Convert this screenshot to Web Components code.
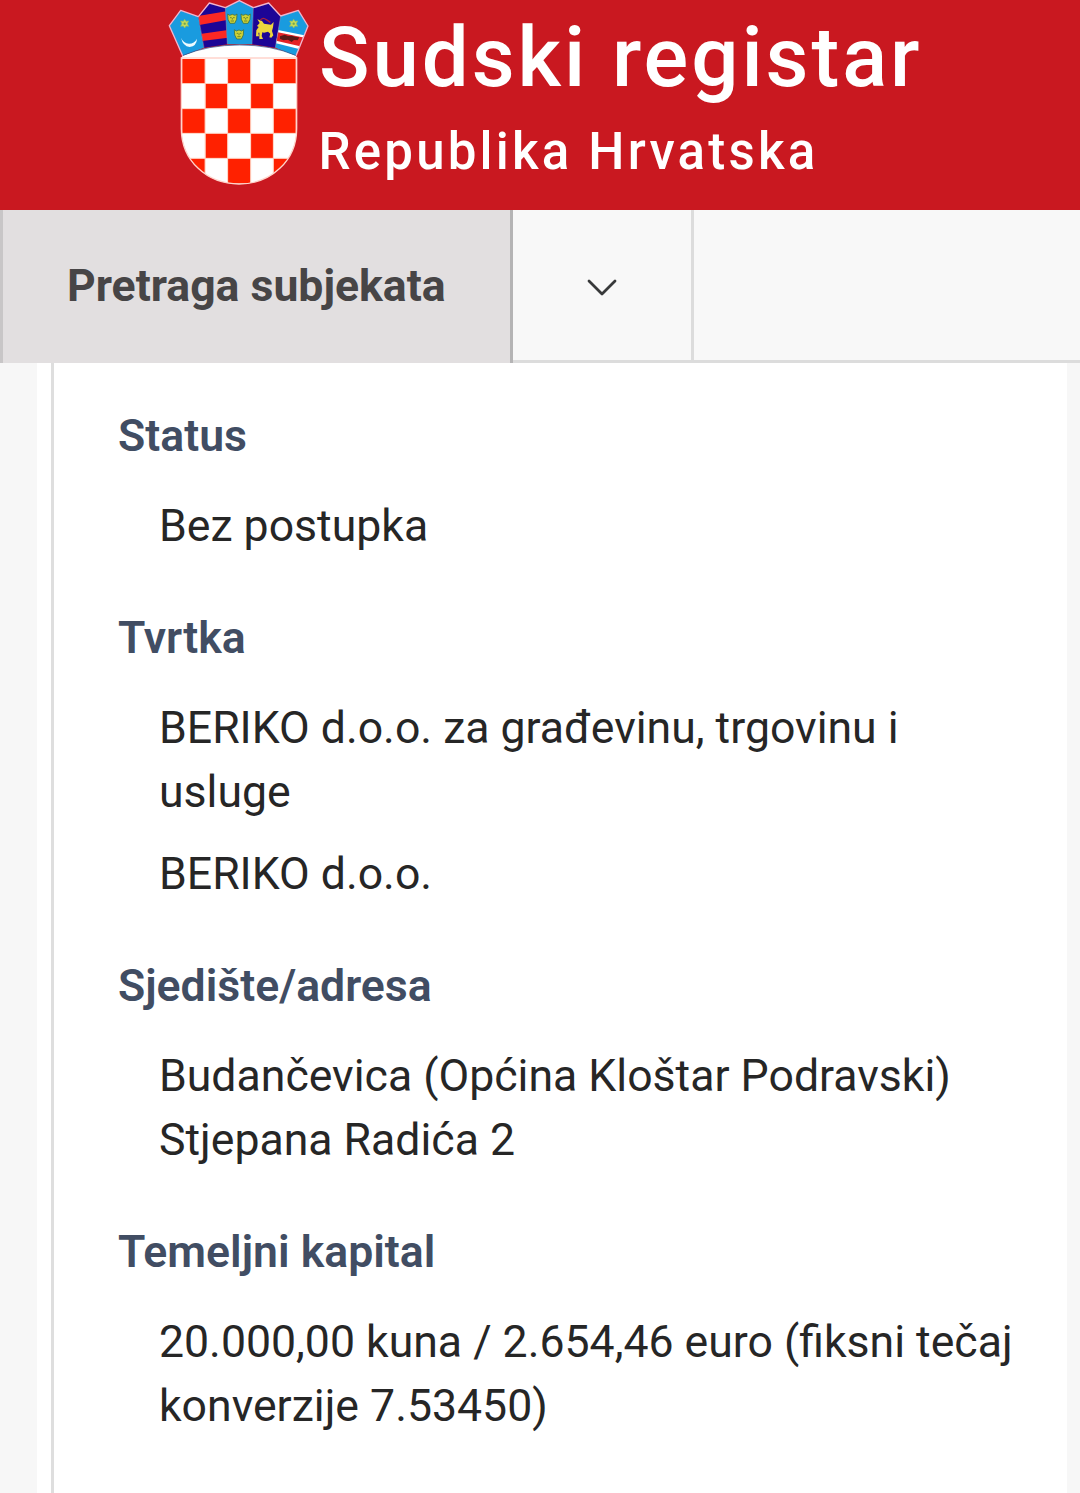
<!DOCTYPE html>
<html lang="hr">
<head>
<meta charset="utf-8">
<title>Sudski registar</title>
<style>
html,body{margin:0;padding:0}
body{font-family:Roboto,"Liberation Sans",sans-serif;background:#f7f7f7;overflow:hidden}
</style>
</head>
<body>
<registry-page></registry-page>
<script>
const define = (name, html) => {
  const t = document.createElement('template');
  t.innerHTML = html;
  customElements.define(name, class extends HTMLElement {
    constructor() {
      super();
      this.attachShadow({mode: 'open'}).append(t.content.cloneNode(true));
    }
  });
};

const xs = [66,135.5,203,272,340,408], ys = [176,250.5,326,400,475,552];
let checks = '';
for (let r = 0; r < 5; r++) for (let c = 0; c < 5; c++)
  if ((r + c) % 2 === 0)
    checks += `<rect x="${xs[c]+1}" y="${ys[r]+1}" width="${xs[c+1]-xs[c]-2}" height="${ys[r+1]-ys[r]-2}"/>`;
let grid = '';
for (let i = 1; i < 5; i++) grid += `M${xs[i]} 174V555M64 ${ys[i]}H410`;
const leopard = (x, y) => `<g transform="translate(${x} ${y})"><path d="M-14-14l6 4 8-3 8 3 6-4-1 16-6 12h-14l-6-12z" fill="#cfd235" stroke="#3f7248" stroke-width="2.5"/><path d="M-7-3h5m4 0h5M-5 7H5M0-2v5" stroke="#4c6c2c" stroke-width="2.2" fill="none"/></g>`;
const star = (x, y) => `<g transform="translate(${x} ${y})"><path d="M0-13l4 6 8-1-4 8 4 8-8-1-4 6-4-6-8 1 4-8-4-8 8 1z" fill="#c9dc56" stroke="#8cbc66" stroke-width="2" stroke-linejoin="round"/><circle r="3.5" fill="#6fa555"/></g>`;

define('croatia-arms', `
<style>:host{display:block;width:160px;height:190px}svg{display:block}</style>
<svg width="160" height="190" viewBox="0 0 480 570">
  <defs><clipPath id="shield"><path d="M64 174H410V386C410 482 333 552 237 552S64 482 64 386Z"/></clipPath>
  <clipPath id="dub"><path d="M115 50L148 9 196 23 202 133 132 143Z"/></clipPath>
  <clipPath id="slav"><path d="M362 48L415 31 444 78 408 167 346 143Z"/></clipPath></defs>
  <path d="M68 167Q145 134 239 134T408 167L411 174H63Z" fill="#fff"/>
  <path d="M28 77L62 31 115 50 132 143 68 167Z" fill="#199bdf"/>
  <path d="M115 50L148 9 196 23 202 133 132 143Z" fill="#1c0596"/>
  <g clip-path="url(#dub)" fill="#fb2823"><path d="M108 49L200 34 201 60 114 76ZM120 102L205 90 205 113 126 123Z"/></g>
  <path d="M196 23L238 2 280 23 276 133H202Z" fill="#199bdf"/>
  <path d="M280 23L326 9 362 48 346 143 276 133Z" fill="#1c0596"/>
  <path d="M362 48L415 31 444 78 408 167 346 143Z" fill="#199bdf"/>
  <g clip-path="url(#slav)"><path d="M350 89L440 107 432 151 340 128Z" fill="#fff"/><path d="M350 96L438 114 430 141 344 121Z" fill="#e52226"/><path d="M360 109l14-5 10 4 12-1 12 4 10 1-5 9-11-1-7 6-11-7-14 2-10-5z" fill="#5a1917"/></g>
  <g fill="none" stroke="#f1b5ce" stroke-width="4" stroke-linejoin="round"><path d="M68 167L28 77 62 31 115 50 148 9 196 23 238 2 280 23 326 9 362 48 415 31 444 78 408 167"/></g>
  <path d="M115 50L132 143M196 23L202 133M280 23L276 133M362 48L346 143" fill="none" stroke="#8090c0" stroke-width="1.5"/>
  <path d="M69 166Q145 135 239 135T407 166" fill="none" stroke="#245593" stroke-width="2"/>
  <path d="M63 113Q70 130 87 131 103 131 111 116 110 138 89 141 69 139 63 113Z" fill="#eefcff"/>
  ${star(74,71)}${star(401,71)}
  ${leopard(217,56)}${leopard(257,56)}${leopard(237,103)}
  <path d="M291 78L299 69 292 58 306 63 312 71 333 74 341 66 339 82 336 93 340 106 334 113 328 112 331 101 324 95 312 98 307 97 305 108 309 117 298 117 298 98 295 98 297 109 288 109 289 91 296 81Z" fill="#ecd63d"/>
  <path d="M300 61Q309 50 319 59L331 67" stroke="#a3213d" stroke-width="4" fill="none"/>
  <g clip-path="url(#shield)"><path fill="#fff" d="M60 170H415V560H60Z"/><g fill="#ff2100">${checks}</g><path d="${grid}" stroke="#ffc5b2" stroke-width="2.5" fill="none"/></g>
  <path d="M64 174H410V386C410 482 333 552 237 552S64 482 64 386Z" fill="none" stroke="#ffd4cb" stroke-width="4"/>
</svg>`);

define('site-header', `
<style>
:host{display:flex;box-sizing:border-box;height:210px;padding-left:160px;background:#c91820;color:#fff;font-weight:500}
.text{display:flex;flex-direction:column;padding:9px 0 0}
.title{font-size:83.4px;line-height:98px;letter-spacing:2.95px;white-space:nowrap;margin-left:-1px}
.sub{font-size:51px;line-height:60px;letter-spacing:3.2px;margin:15px 0 0 -1.5px;white-space:nowrap}
</style>
<croatia-arms></croatia-arms>
<div class="text"><div class="title"><slot name="title"></slot></div><div class="sub"><slot name="sub"></slot></div></div>`);

define('nav-bar', `
<style>
:host{display:flex;height:153px;background:#f8f8f8;color:#474546}
.active{box-sizing:border-box;width:513px;border-left:3px solid #c8c6c7;border-right:3px solid #b5b4b5;background:#e2dfe0;padding-left:64px;font-weight:700;font-size:44.55px;line-height:152px;white-space:nowrap}
.menu{box-sizing:border-box;width:181px;border-right:3px solid #dcdcdc;border-bottom:3px solid #dcdcdc;display:flex;align-items:center;justify-content:center}
.rest{flex:1;box-sizing:border-box;border-bottom:3px solid #dcdcdc}
svg{display:block;margin-top:5px}
</style>
<div class="active"><slot></slot></div>
<div class="menu"><svg width="32" height="20" viewBox="0 0 32 20"><path d="M3 3L16 16 29 3" fill="none" stroke="#38393a" stroke-width="2.8" stroke-linecap="round" stroke-linejoin="round"/></svg></div>
<div class="rest"></div>`);

define('data-field', `
<style>
:host{display:block}
.label{font-size:44.6px;line-height:64px;font-weight:600;color:#414d63;margin-bottom:26px;white-space:nowrap}
.values{display:flex;flex-direction:column;gap:18px;padding-left:41px;font-size:44.6px;line-height:64px;color:#262626}
</style>
<div class="label"><slot name="label"></slot></div><div class="values"><slot></slot></div>`);

define('detail-panel', `
<style>
:host{display:block;box-sizing:border-box;height:1130px;margin:0 13px 0 37px;padding-left:14px;background:#fff;overflow:hidden}
.inner{box-sizing:border-box;height:100%;border-left:3px solid #dedede;padding:41px 0 0 64px;display:flex;flex-direction:column;gap:48px}
</style>
<div class="inner"><slot></slot></div>`);

define('registry-page', `
<style>:host{display:block;width:1080px;height:1493px;background:#f7f7f7}</style>
<site-header><span slot="title">Sudski registar</span><span slot="sub">Republika Hrvatska</span></site-header>
<nav-bar>Pretraga subjekata</nav-bar>
<detail-panel>
<data-field><span slot="label">Status</span><div>Bez postupka</div></data-field>
<data-field><span slot="label">Tvrtka</span><div>BERIKO d.o.o. za građevinu, trgovinu i<br>usluge</div><div>BERIKO d.o.o.</div></data-field>
<data-field><span slot="label">Sjedište/adresa</span><div>Budančevica (Općina Kloštar Podravski)<br>Stjepana Radića 2</div></data-field>
<data-field><span slot="label">Temeljni kapital</span><div>20.000,00 kuna / 2.654,46 euro (fiksni tečaj<br>konverzije 7.53450)</div></data-field>
</detail-panel>`);
</script>
</body>
</html>
